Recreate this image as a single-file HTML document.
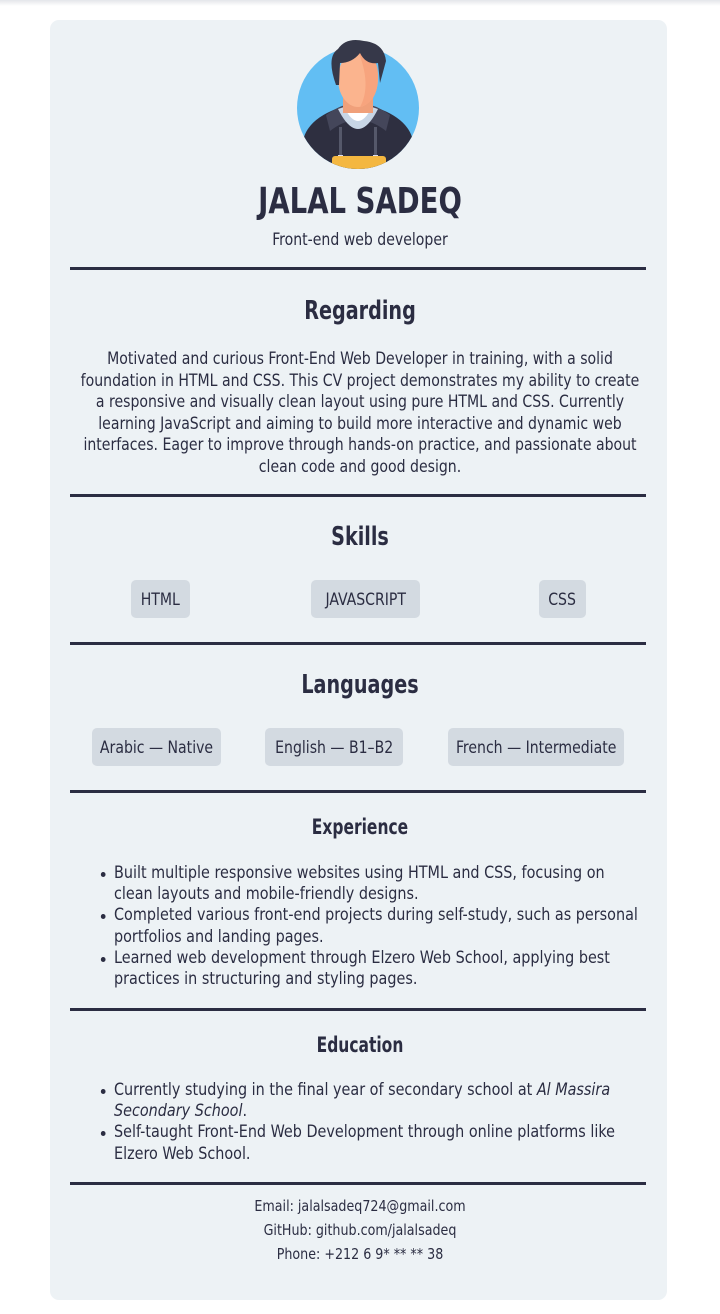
<!DOCTYPE html>
<html><head><meta charset="utf-8"><style>
*{margin:0;padding:0;box-sizing:border-box}
body{width:720px;height:1314px;background:#fff;position:relative;overflow:hidden;font-family:"Liberation Sans Narrow","DejaVu Sans Condensed","Liberation Sans",sans-serif;color:#2b2d42}
.top{position:absolute;left:0;top:0;width:720px;height:6px;background:linear-gradient(#e4e6ea,#fff)}
.card{position:absolute;left:50px;top:20px;width:617px;height:1280px;background:#edf2f5;border-radius:9px}
.c{position:absolute;left:0;width:720px;text-align:center;white-space:nowrap;transform-origin:360px 0}
.hr{position:absolute;left:70px;width:576px;height:3px;background:#2b2d42}
.h2{font-weight:bold;font-size:26px;transform:scaleX(.82)}
.h3{font-weight:bold;font-size:21px;transform:scaleX(.82)}
.p{font-size:17px;line-height:21.5px;transform:scaleX(.92)}
.tag{position:absolute;height:38px;background:#d3dae1;border-radius:5px;font-size:17px;line-height:40px;text-align:center;white-space:nowrap}
.tag span{display:inline-block;transform:scaleX(.92)}
ul{position:absolute;left:114px;font-size:17px;line-height:21.2px;list-style:none;transform:scaleX(.94);transform-origin:0 0}
li{position:relative;white-space:nowrap}
li:before{content:"";position:absolute;left:-14px;top:9px;width:5px;height:5px;border-radius:50%;background:#2b2d42}
.f{font-size:15px;transform:scaleX(.94)}
</style></head><body>
<div class="top"></div>
<div class="card"></div>
<svg style="position:absolute;left:290px;top:35px" width="140" height="140" viewBox="0 0 140 140">
<defs><clipPath id="cc"><circle cx="68" cy="73" r="61"/></clipPath></defs>
<circle cx="68" cy="73" r="61" fill="#62bef3"/>
<g clip-path="url(#cc)">
<path d="M8 140 L14 102 Q20 84 46 74 L90 74 Q116 84 122 102 L128 140Z" fill="#2e2f40"/>
<path d="M36 80 Q68 56 100 80 L96 96 Q68 74 40 96Z" fill="#44465a"/>
<path d="M48 74 Q68 114 88 74 L82 72 Q68 98 54 72Z" fill="#c8d6e6"/>
<path d="M54 72 L82 72 Q68 100 54 72Z" fill="#fff"/>
<rect x="53" y="58" width="30" height="20" fill="#f0a07a"/>
<rect x="49" y="92" width="3" height="30" fill="#55586a"/><rect x="84" y="92" width="3" height="30" fill="#55586a"/>
<rect x="48" y="120" width="5" height="6" fill="#dde"/><rect x="83" y="120" width="5" height="6" fill="#dde"/>
<rect x="42" y="121" width="54" height="20" rx="3" fill="#f4b740"/>
</g>
<ellipse cx="68" cy="44" rx="20" ry="28" fill="#fbb48e"/>
<path d="M68 16 Q89 18 88 44 Q87 68 70 72 Q82 50 68 16Z" fill="#f7a47e"/>
<path d="M46 50 Q36 22 48 14 Q56 2 74 6 Q94 8 96 26 L90 48 L88 28 Q76 30 70 18 Q62 28 50 28 L49 50Z" fill="#363849"/>
</svg>
<div class="c" style="top:181px;font-size:36px;font-weight:bold;transform:scaleX(.85)">JALAL SADEQ</div>
<div class="c" style="top:230px;font-size:17px;transform:scaleX(.92)">Front-end web developer</div>
<div class="hr" style="top:267px"></div>
<div class="c h2" style="top:296px">Regarding</div>
<div class="c p" style="top:349px">Motivated and curious Front-End Web Developer in training, with a solid<br>foundation in HTML and CSS. This CV project demonstrates my ability to create<br>a responsive and visually clean layout using pure HTML and CSS. Currently<br>learning JavaScript and aiming to build more interactive and dynamic web<br>interfaces. Eager to improve through hands-on practice, and passionate about<br>clean code and good design.</div>
<div class="hr" style="top:494px"></div>
<div class="c h2" style="top:522px">Skills</div>
<div class="tag" style="left:131px;top:580px;width:59px"><span>HTML</span></div>
<div class="tag" style="left:311px;top:580px;width:109px"><span>JAVASCRIPT</span></div>
<div class="tag" style="left:539px;top:580px;width:47px"><span>CSS</span></div>
<div class="hr" style="top:642px"></div>
<div class="c h2" style="top:670px">Languages</div>
<div class="tag" style="left:92px;top:728px;width:129px"><span>Arabic — Native</span></div>
<div class="tag" style="left:265px;top:728px;width:138px"><span>English — B1–B2</span></div>
<div class="tag" style="left:448px;top:728px;width:176px"><span>French — Intermediate</span></div>
<div class="hr" style="top:790px"></div>
<div class="c h3" style="top:815px">Experience</div>
<ul style="top:863px">
<li>Built multiple responsive websites using HTML and CSS, focusing on<br>clean layouts and mobile-friendly designs.</li>
<li>Completed various front-end projects during self-study, such as personal<br>portfolios and landing pages.</li>
<li>Learned web development through Elzero Web School, applying best<br>practices in structuring and styling pages.</li>
</ul>
<div class="hr" style="top:1008px"></div>
<div class="c h3" style="top:1033px">Education</div>
<ul style="top:1080px">
<li>Currently studying in the final year of secondary school at <i>Al Massira<br>Secondary School</i>.</li>
<li>Self-taught Front-End Web Development through online platforms like<br>Elzero Web School.</li>
</ul>
<div class="hr" style="top:1182px"></div>
<div class="c f" style="top:1197px">Email: jalalsadeq724@gmail.com</div>
<div class="c f" style="top:1221px">GitHub: github.com/jalalsadeq</div>
<div class="c f" style="top:1245px">Phone: +212 6 9* ** ** 38</div>
</body></html>
